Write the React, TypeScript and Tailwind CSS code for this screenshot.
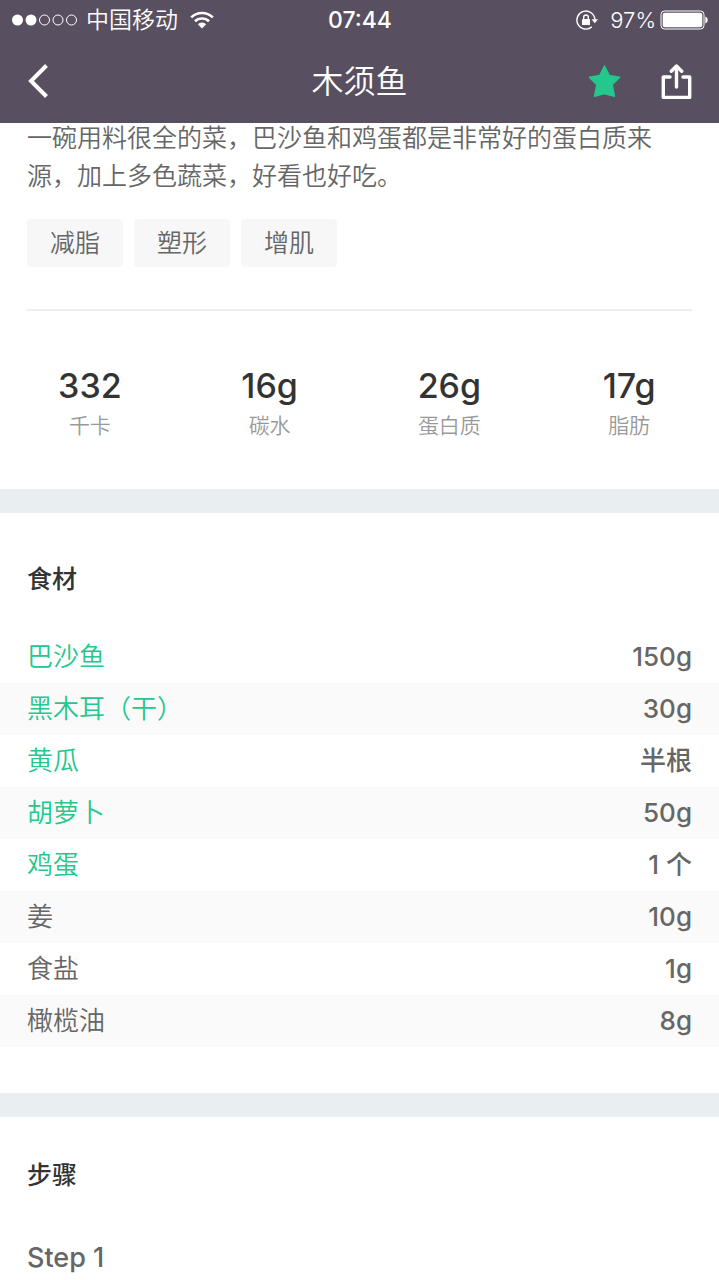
import React from 'react';

interface Nutrient {
  value: string;
  label: string;
}

interface Ingredient {
  name: string;
  amount: string;
  link?: string;
}

const TAGS = ['减脂', '塑形', '增肌'];

const NUTRIENTS: Nutrient[] = [
  { value: '332', label: '千卡' },
  { value: '16g', label: '碳水' },
  { value: '26g', label: '蛋白质' },
  { value: '17g', label: '脂肪' },
];

const INGREDIENTS: Ingredient[] = [
  { name: '巴沙鱼', amount: '150g', link: '#basa' },
  { name: '黑木耳（干）', amount: '30g', link: '#fungus' },
  { name: '黄瓜', amount: '半根', link: '#cucumber' },
  { name: '胡萝卜', amount: '50g', link: '#carrot' },
  { name: '鸡蛋', amount: '1 个', link: '#egg' },
  { name: '姜', amount: '10g' },
  { name: '食盐', amount: '1g' },
  { name: '橄榄油', amount: '8g' },
];

const StatusBar: React.FC = () => (
  <div className="flex h-10 items-center pl-3 pr-[11px] text-[23px] leading-10">
    <div className="flex flex-1 items-center">
      <svg className="mr-2 h-3 w-[66px]" viewBox="0 0 66 12" fill="none" stroke="currentColor">
        <circle cx="5.5" cy="6" r="5.5" fill="currentColor" stroke="none" />
        <circle cx="19" cy="6" r="5.5" fill="currentColor" stroke="none" />
        <circle cx="32.5" cy="6" r="5" />
        <circle cx="46" cy="6" r="5" />
        <circle cx="59.5" cy="6" r="5" />
      </svg>
      <span className="font-[350]">中国移动</span>
      <svg className="ml-3 h-[18px] w-6" viewBox="0 0 24 18" fill="none" stroke="currentColor" strokeWidth="2.6">
        <path d="M1.2 6.4a15.4 15.4 0 0 1 21.6 0" />
        <path d="M5 10.3a10 10 0 0 1 14 0" />
        <path d="M12 17.5l-4.2-4.3a6 6 0 0 1 8.4 0z" fill="currentColor" stroke="none" />
      </svg>
    </div>
    <span className="font-medium">07:44</span>
    <div className="flex flex-1 items-center justify-end">
      <svg className="mr-3 h-5 w-[22px]" viewBox="0 0 22 20" fill="none" stroke="currentColor" strokeWidth="1.4">
        <path d="M15.8 16.9A9 9 0 1 1 18.9 9.5" />
        <path d="M15.6 9.3h6.4l-3.2 4z" fill="currentColor" stroke="none" />
        <rect x="6" y="9" width="8" height="6" rx="0.6" fill="currentColor" stroke="none" />
        <path d="M7.7 9.4V7.3a2.3 2.3 0 0 1 4.6 0v2.1" />
      </svg>
      <span className="text-[22px] font-[350]">97%</span>
      <svg className="ml-1 h-5 w-12" viewBox="0 0 48 20" fill="none" stroke="currentColor">
        <rect x="1" y="1" width="43" height="18" rx="3.5" />
        <rect x="2.7" y="2.7" width="39.6" height="14.6" rx="2" fill="currentColor" stroke="none" />
        <path d="M45.3 6.5c1.4.4 2.4 1.8 2.4 3.5s-1 3.1-2.4 3.5z" fill="currentColor" stroke="none" />
      </svg>
    </div>
  </div>
);

const NavBar: React.FC = () => (
  <div className="flex h-[83px] items-center px-[27px]">
    <div className="flex flex-1 items-center">
      <button type="button" aria-label="返回" className="cursor-pointer">
        <svg className="h-9 w-[22px]" viewBox="0 0 22 36" fill="none" stroke="currentColor" strokeWidth="4">
          <path d="M19.5 1.5L4 17l15.5 15.5" />
        </svg>
      </button>
    </div>
    <h1 className="text-[32px] leading-10 font-[350]">木须鱼</h1>
    <div className="flex flex-1 items-center justify-end gap-10">
      <button type="button" aria-label="收藏" className="cursor-pointer text-[#24c78c]">
        <svg className="h-9 w-8" viewBox="0 0 32 36" fill="currentColor" stroke="currentColor" strokeWidth="1.6" strokeLinejoin="round">
          <path d="M15.5 2l4.7 9.6 10.4 1.6-7.5 7.6 2.3 11.4-9.9-2.6-9.900 2.600 2.300-11.400L.4 13.200l10.400-1.600z" />
        </svg>
      </button>
      <button type="button" aria-label="分享" className="cursor-pointer">
        <svg className="h-9 w-[31px]" viewBox="0 0 31 36" fill="none" stroke="currentColor" strokeWidth="3.4" strokeLinecap="round" strokeLinejoin="round">
          <path d="M9 13H2.3v20.4h26.4V13H22" />
          <path d="M15.5 23V3" />
          <path d="M10.3 7.2L15.5 2l5.2 5.2" />
        </svg>
      </button>
    </div>
  </div>
);

const NutrientList: React.FC = () => (
  <dl className="grid grid-cols-4 pt-[54px] pb-11 text-center">
    {NUTRIENTS.map((item) => (
      <div key={item.label} className="flex flex-col-reverse">
        <dt className="text-[21px] leading-[38px] font-[350] text-[#999]">{item.label}</dt>
        <dd className="text-[34px] leading-[42px] font-medium text-[#333]">{item.value}</dd>
      </div>
    ))}
  </dl>
);

const IngredientTable: React.FC = () => (
  <table className="w-full text-[26px] leading-[52px] text-[#666]">
    <tbody>
      {INGREDIENTS.map((item) => (
        <tr key={item.name} className="even:bg-[#fafafa]">
          <th scope="row" className="py-0 pl-[27px] text-left font-[350]">
            {item.link ? (
              <a href={item.link} className="text-[#24c78c]">{item.name}</a>
            ) : (
              item.name
            )}
          </th>
          <td className="py-0 pr-[27px] text-right font-medium">{item.amount}</td>
        </tr>
      ))}
    </tbody>
  </table>
);

export default function App() {
  return (
    <div className="min-h-screen bg-white font-['Inter','Noto_Sans_CJK_SC',sans-serif]" lang="zh-CN">
      <header className="sticky top-0 z-10 bg-[#584f60] text-white">
        <StatusBar />
        <NavBar />
      </header>

      <main>
        {/* intro is scrolled slightly under the header */}
        <section className="-mt-1">
          <div className="mx-[27px] border-b-2 border-[#eee] pb-[42px] text-[25px] font-[350] text-[#666]">
            <p className="leading-[38px]">
              一碗用料很全的菜，巴沙鱼和鸡蛋都是非常好的蛋白质来源，加上多色蔬菜，好看也好吃。
            </p>
            <ul className="mt-6 flex gap-[11px]">
              {TAGS.map((tag) => (
                <li key={tag} className="rounded bg-[#f7f7f7] px-[23px] leading-[48px]">{tag}</li>
              ))}
            </ul>
          </div>
          <NutrientList />
        </section>

        <section className="border-t-24 border-[#e9eef1] pb-[46px]">
          <h2 className="px-[27px] pt-[46px] pb-[32px] text-[25px] leading-10 font-medium text-[#333]">食材</h2>
          <IngredientTable />
        </section>

        <section className="border-t-24 border-[#e9eef1]">
          <h2 className="px-[27px] pt-[38px] pb-[43px] text-[25px] leading-10 font-medium text-[#333]">步骤</h2>
          <h3 className="px-[27px] text-[27px] leading-10 font-medium text-[#666]">Step 1</h3>
        </section>
      </main>
    </div>
  );
}
